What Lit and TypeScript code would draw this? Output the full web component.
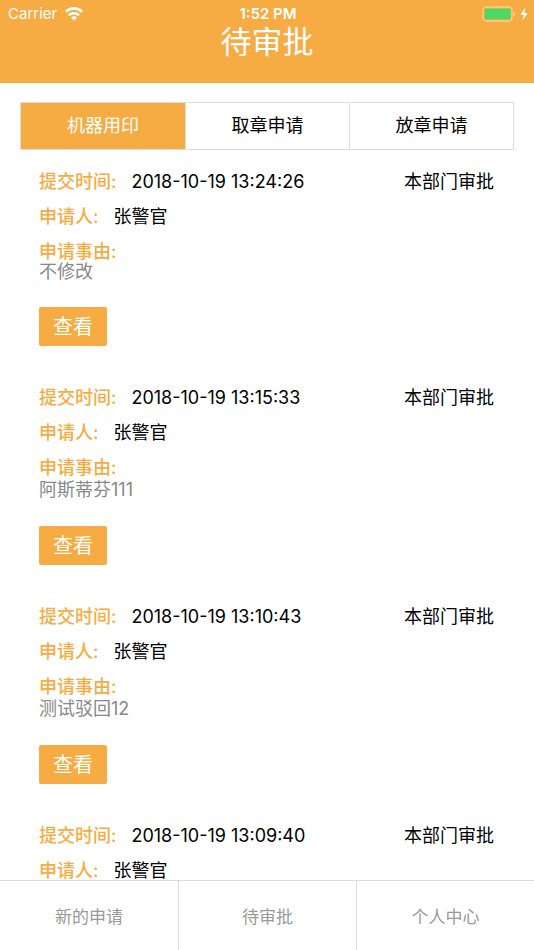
import { LitElement, html, css, nothing } from "lit";
import { customElement, property, state } from "lit/decorators.js";
import { classMap } from "lit/directives/class-map.js";

interface Application {
  time: string;
  applicant: string;
  reason?: string;
  status: string;
}

const applications: Application[] = [
  { time: "2018-10-19 13:24:26", applicant: "张警官", reason: "不修改", status: "本部门审批" },
  { time: "2018-10-19 13:15:33", applicant: "张警官", reason: "阿斯蒂芬111", status: "本部门审批" },
  { time: "2018-10-19 13:10:43", applicant: "张警官", reason: "测试驳回12", status: "本部门审批" },
  { time: "2018-10-19 13:09:40", applicant: "张警官", status: "本部门审批" },
];

@customElement("status-bar")
export class StatusBar extends LitElement {
  static styles = css`
    :host {
      display: grid;
      grid-template-columns: 1fr auto 1fr;
      align-items: center;
      height: 27px;
      padding: 0 6px 0 8px;
      font-size: 15px;
      line-height: 27px;
    }
    .carrier {
      display: flex;
      align-items: center;
      gap: 8px;
    }
    .clock {
      font-weight: 600;
    }
    .power {
      display: flex;
      align-items: center;
      justify-content: flex-end;
      gap: 4px;
    }
    svg {
      display: block;
    }
  `;

  render() {
    return html`
      <div class="carrier">
        <span>Carrier</span>
        <svg width="18" height="14" viewBox="0 0 18 14" aria-hidden="true">
          <g fill="none" stroke="#fff" stroke-width="2.6">
            <path d="M0.9 4.7A11.6 11.6 0 0 1 17.1 4.7" />
            <path d="M3.9 8.3A7.3 7.3 0 0 1 14.1 8.3" />
          </g>
          <path fill="#fff" d="M9 13.6 6 10.7A4.3 4.3 0 0 1 12 10.7Z" />
        </svg>
      </div>
      <time class="clock">1:52 PM</time>
      <div class="power">
        <svg width="34" height="16" viewBox="0 0 34 16" aria-hidden="true">
          <rect x="1" y="1" width="29" height="14" rx="3.5" fill="none" stroke="#fff" stroke-opacity="0.42" stroke-width="1.3" />
          <rect x="2.6" y="2.8" width="26" height="10.4" rx="1.5" fill="#4cd964" />
          <path d="M31.7 5.8C33.6 6.5 33.6 9.5 31.7 10.2Z" fill="#fff" fill-opacity="0.5" />
        </svg>
        <svg width="8" height="14" viewBox="0 0 8 14" aria-hidden="true">
          <path d="M5.4 0.6 0.3 7.8H3.6L2.4 13.4 7.7 5.9H4.4Z" fill="#fff" />
        </svg>
      </div>
    `;
  }
}

@customElement("application-item")
export class ApplicationItem extends LitElement {
  @property({ attribute: false }) item!: Application;

  static styles = css`
    :host {
      display: block;
      padding-bottom: 34px;
      font-size: 18px;
    }
    .row {
      display: flex;
      gap: 15px;
      height: 35px;
      line-height: 35px;
      white-space: nowrap;
    }
    .label {
      color: #f6ac43;
      font-weight: 500;
    }
    .status {
      margin-left: auto;
    }
    .heading {
      padding-top: 8px;
      line-height: 20px;
    }
    .reason {
      margin: 0 0 25px;
      color: #888;
      line-height: 20px;
    }
    .mixed {
      line-height: 23px;
    }
    button {
      display: block;
      width: 68px;
      height: 39px;
      padding: 0;
      border: 0;
      border-radius: 2px;
      background: #f6ac43;
      color: #fff;
      font: inherit;
      font-size: 20px;
      line-height: 38px;
    }
  `;

  render() {
    const { time, applicant, reason, status } = this.item;
    return html`
      <article lang="zh-CN">
        <div class="row">
          <span class="label">提交时间:</span>
          <time>${time}</time>
          <span class="status">${status}</span>
        </div>
        <div class="row">
          <span class="label">申请人:</span>
          <span>${applicant}</span>
        </div>
        ${reason
          ? html`
              <div class="label heading">申请事由:</div>
              <p class=${classMap({ reason: true, mixed: /\d/.test(reason) })}>${reason}</p>
              <button type="button">查看</button>
            `
          : nothing}
      </article>
    `;
  }
}

@customElement("app-root")
export class AppRoot extends LitElement {
  @state() private tab = 0;

  private tabs = ["机器用印", "取章申请", "放章申请"];
  private links = ["新的申请", "待审批", "个人中心"];

  static styles = css`
    :host {
      display: flex;
      flex-direction: column;
      height: 100vh;
      background: #fff;
      color: #000;
      font-family: Inter, "Noto Sans CJK SC", sans-serif;
    }
    header {
      flex: none;
      height: 83px;
      background: #f6ac43;
      color: #fff;
    }
    h1 {
      margin: 0;
      font-size: 31px;
      font-weight: 400;
      line-height: 30px;
      text-align: center;
    }
    main {
      flex: 1;
      min-height: 0;
      overflow-y: auto;
      scrollbar-width: none;
    }
    .tabs {
      display: grid;
      grid-template-columns: repeat(3, 1fr);
      height: 46px;
      margin: 19px 20px 14px;
      border: 1px solid #ddd;
    }
    .tab {
      padding: 0;
      border: 0;
      background: #fff;
      color: #000;
      font: inherit;
      font-size: 18px;
      line-height: 46px;
    }
    .tab + .tab {
      border-left: 1px solid #ddd;
    }
    .tab.active {
      background: #f6ac43;
      color: #fff;
    }
    .list {
      padding: 0 40px 0 39px;
    }
    nav {
      flex: none;
      display: grid;
      grid-template-columns: repeat(3, 1fr);
      height: 69px;
      border-top: 1px solid #ddd;
    }
    nav a {
      color: #999;
      font-size: 17px;
      line-height: 72px;
      text-align: center;
      text-decoration: none;
    }
    nav a + a {
      border-left: 1px solid #ddd;
    }
  `;

  render() {
    return html`
      <header>
        <status-bar></status-bar>
        <h1>待审批</h1>
      </header>
      <main>
        <div class="tabs" role="tablist">
          ${this.tabs.map(
            (name, i) => html`<button
              type="button"
              role="tab"
              aria-selected=${i === this.tab}
              class=${classMap({ tab: true, active: i === this.tab })}
              @click=${() => (this.tab = i)}
            >${name}</button>`
          )}
        </div>
        <div class="list">
          ${applications.map((item) => html`<application-item .item=${item}></application-item>`)}
        </div>
      </main>
      <nav>${this.links.map((name) => html`<a href="#">${name}</a>`)}</nav>
    `;
  }
}
